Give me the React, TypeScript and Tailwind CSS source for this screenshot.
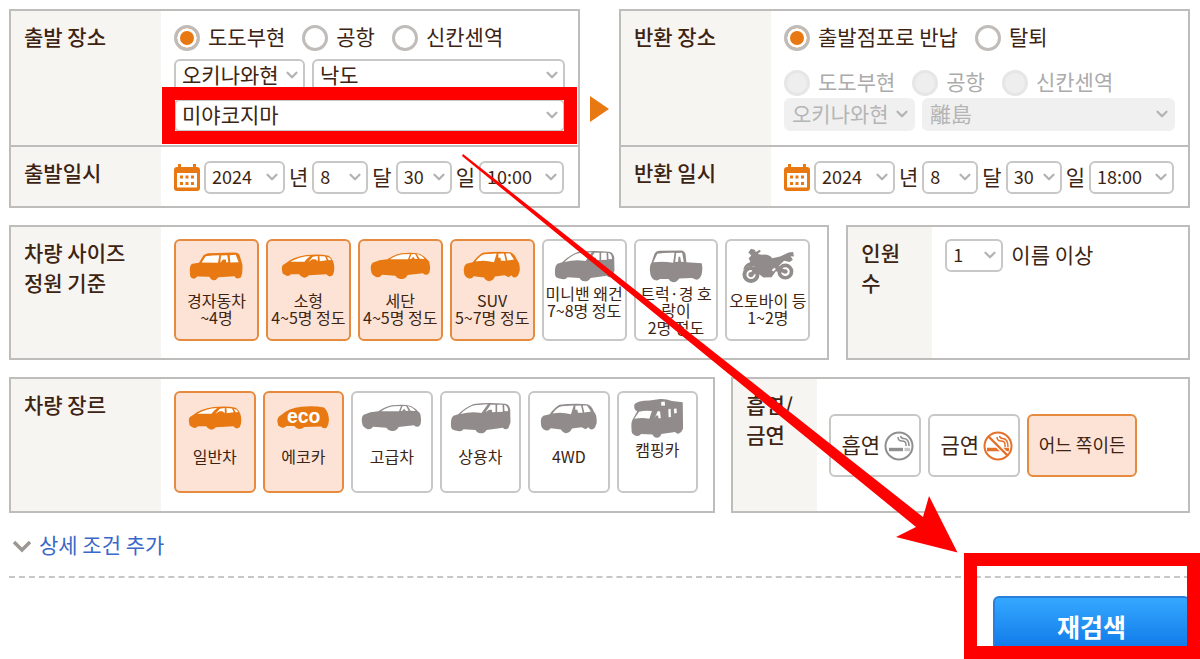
import type { ReactNode } from "react";
import { ChevronDown } from "lucide-react";
import clsx from "clsx";

const KeiCar = () => (
  <svg viewBox="88 82 162 86" width="54" height="29" fill="currentColor">
    <path d="M91 145Q88 122 98 117L118 114L131 92Q135 87 145 85L225 83Q237 83 240 92L248 118Q250 145 244 157L236 161Q228 163 225 154L176 157Q170 167 160 166Q153 165 149 156L112 155Q108 163 100 161Q90 158 91 145Z" />
    <path fill="#fff" d="M126 113L138 94Q158 91 179 91L175 114ZM184 92L203 91L206 112L199 112L199 104L190 104L182 114ZM210 91L228 90L237 112L212 113Z" />
  </svg>
);

const CompactCar = () => (
  <svg viewBox="363 90 163 72" width="54" height="24" fill="currentColor">
    <path d="M366 138Q363 124 375 119Q400 98 440 93Q480 89 507 95Q520 104 523 122Q526 142 519 154Q508 162 500 151L447 154Q441 162 431 161Q422 159 418 151L393 151Q387 158 378 155L368 149Z" />
    <path fill="#fff" d="M391 113Q418 98 451 96L440 106L434 113ZM446 113L459 98L474 96L474 112L467 106L458 106ZM479 96L496 97L501 109L480 112ZM501 98Q511 99 515 108L507 109Z" />
  </svg>
);

const EcoCar = () => (
  <svg viewBox="348 82 163 74" width="54" height="24" fill="currentColor">
    <path d="M351 132Q348 118 360 111Q385 88 425 84Q468 81 494 87Q506 96 509 118Q511 136 503 148Q493 155 486 145L434 147Q426 154 416 153Q407 151 403 144L379 144Q371 151 363 148L353 142Z" />
    <text x="380" y="133" fill="#fff" fontSize="60" fontWeight="700" fontFamily="Liberation Sans, Arial, sans-serif">eco</text>
  </svg>
);

const Sedan = () => (
  <svg viewBox="628 90 183 84" width="61" height="28" fill="currentColor">
    <path d="M632 150Q627 130 636 122Q655 113 680 112Q702 97 722 94Q755 90 778 96Q794 104 805 118Q811 136 806 152Q797 164 787 154L741 159Q734 173 720 171Q709 170 704 161L664 158Q656 169 645 164Q634 160 632 150Z" />
    <path fill="#fff" d="M688 112Q708 98 727 97L748 96L742 112ZM752 97L763 96L771 110L763 111L758 104L751 111L747 111ZM768 96Q783 99 792 111L777 110Z" />
  </svg>
);

const Suv = () => (
  <svg viewBox="68 85 174 92" width="58" height="31" fill="currentColor">
    <path d="M71 148Q68 130 78 123L97 118Q112 98 127 90Q165 85 210 88Q223 92 230 111Q240 122 238 145L233 158Q222 171 213 157L205 163L193 157L164 161Q157 175 146 175Q136 174 131 164L100 160Q94 170 84 166Q71 160 71 148Z" />
    <path fill="#fff" d="M106 116Q119 96 133 94L169 92L161 118Q132 110 106 116ZM174 93L191 92L196 114L182 114L180 105L174 105ZM196 92L209 92L221 110L201 113Z" />
  </svg>
);

const Minivan = () => (
  <svg viewBox="340 84 182 96" width="61" height="32" fill="currentColor">
    <path d="M343 160Q340 132 350 125L364 121Q388 98 411 90Q450 84 505 89Q517 91 520 106L521 145L515 162Q505 170 498 161L449 168Q443 179 431 178Q420 177 416 168L380 166Q374 174 364 171Q344 170 343 160Z" />
    <path fill="#fff" d="M371 120Q395 97 413 94L453 91L434 117Q402 112 371 120ZM446 115L461 92L476 92L476 114L466 115L465 107L457 107ZM481 92L497 92L498 113L481 114ZM502 92Q513 94 514 111L503 112Z" />
  </svg>
);

const Truck = () => (
  <svg viewBox="625 75 163 99" width="54" height="33" fill="currentColor">
    <path d="M628 140Q626 120 633 112L642 85Q646 78 656 77L725 76Q733 78 735 86L738 112L784 115Q788 130 784 148Q777 167 766 164L755 159L716 161Q709 173 698 172Q688 171 684 162L658 162Q651 169 642 165Q630 160 628 140Z" />
    <path fill="#fff" d="M638 112L650 86Q675 82 702 83L698 113Q665 108 638 112ZM707 84L725 83L730 110L722 111L719 95L714 95L713 110L704 111Z" />
  </svg>
);

const Motorcycle = () => (
  <svg viewBox="900 70 162 110" width="54" height="36" fill="currentColor">
    <circle cx="929" cy="151" r="20" fill="none" stroke="currentColor" strokeWidth="12" />
    <circle cx="1034" cy="142" r="19" fill="none" stroke="currentColor" strokeWidth="11" />
    <circle cx="929" cy="151" r="8" />
    <circle cx="1034" cy="142" r="7" />
    <path d="M921 84L929 72L940 75L944 82L956 75L959 80L950 88L963 91Q982 86 994 101L1018 96L1044 84L1058 82L1060 96L1050 95L1057 106L1047 113L1030 109L1014 125L1036 139L1032 147L1005 141L992 159L967 160L948 146L934 154L927 149L940 125L919 127L905 137Q908 120 927 113L922 101L930 93Z" />
    <path fill="#fff" d="M1000 130L1005 134L998 142L992 138Z" />
  </svg>
);

const Camper = () => (
  <svg viewBox="601 56 163 122" width="54" height="40" fill="currentColor">
    <path d="M605 153Q602 130 609 120L622 97Q609 88 614 75Q622 65 660 64L692 59Q710 58 728 65L761 69L762 150L756 160Q745 170 738 160L696 166Q692 177 682 177Q672 176 669 167L634 166Q626 175 616 170Q604 167 605 153Z" />
    <path fill="#fff" d="M613 119L628 98Q646 93 667 96L659 119Q637 115 613 119ZM675 118L685 96L692 97L694 118L687 118L686 109L680 109ZM695 68L706 67L707 79L696 80ZM717 90L724 89L725 114L718 115ZM734 89L742 88L743 102L735 103Z" />
  </svg>
);

const SmokingIcon = () => (
  <svg viewBox="0 0 30 30" width="30" height="30" fill="none" stroke="#8f8f8f">
    <circle cx="15" cy="15" r="13.5" strokeWidth="2" />
    <path d="M5 18.5H19" strokeWidth="3.4" />
    <path d="M20.5 18.5H26" strokeWidth="3.4" stroke="#c9c5c3" />
    <path d="M14 6Q14 10 18 10Q22 10 22 13.5L22 15M16.5 5Q17 7.5 20 7.5Q25 8 25 15" strokeWidth="1.5" />
  </svg>
);

const NoSmokingIcon = () => (
  <svg viewBox="0 0 30 30" width="30" height="30" fill="none" stroke="#e5702a">
    <path d="M4 18.5H18M20 18.5H26" strokeWidth="3.4" />
    <path d="M14 6Q14 10 18 10Q22 10 22 13.5L22 16M16.5 5Q17 7.5 20 7.5Q25 8 25 16" strokeWidth="1.5" />
    <path d="M6 6L24 24" stroke="#fff" strokeWidth="5" />
    <circle cx="15" cy="15" r="13.5" strokeWidth="2" />
    <path d="M5.5 5.5L24.5 24.5" strokeWidth="2.4" />
  </svg>
);

const carSizes = [
  { id: "kei", icon: KeiCar, lines: ["경자동차", "~4명"], checked: true },
  { id: "compact", icon: CompactCar, lines: ["소형", "4~5명 정도"], checked: true },
  { id: "sedan", icon: Sedan, lines: ["세단", "4~5명 정도"], checked: true },
  { id: "suv", icon: Suv, lines: ["SUV", "5~7명 정도"], checked: true },
  { id: "minivan", icon: Minivan, lines: ["미니밴 왜건", "7~8명 정도"], tight: true },
  { id: "truck", icon: Truck, lines: ["트럭·경 호", "랑이", "2명 정도"], tight: true },
  { id: "bike", icon: Motorcycle, lines: ["오토바이 등", "1~2명"] },
];

const carGenres = [
  { id: "standard", icon: CompactCar, lines: ["일반차"], checked: true },
  { id: "eco", icon: EcoCar, lines: ["에코카"], checked: true },
  { id: "luxury", icon: Sedan, lines: ["고급차"] },
  { id: "business", icon: Minivan, lines: ["상용차"] },
  { id: "4wd", icon: Suv, lines: ["4WD"] },
  { id: "camper", icon: Camper, lines: ["캠핑카"], tight: true },
];

const tileStyle =
  "rounded-md border-2 border-[#c9c7c5] bg-white has-checked:border-[#e58a3e] has-checked:bg-[#fce3d6]";

type TileProps = {
  name: string;
  item: { id: string; icon: () => ReactNode; lines: string[]; checked?: boolean; tight?: boolean };
  lineClass: string;
};

const CarTile = ({ name, item, lineClass }: TileProps) => (
  <label
    className={clsx(
      tileStyle,
      "relative flex h-[102px] min-w-0 flex-1 cursor-pointer flex-col items-center pt-[7px] text-[#918c8b] has-checked:text-[#e87811]"
    )}
  >
    <input type="checkbox" name={name} value={item.id} defaultChecked={item.checked} className="sr-only" />
    <span className="flex h-9 shrink-0 items-center">
      <item.icon />
    </span>
    <span
      className={clsx(
        "flex flex-col items-center whitespace-nowrap text-[16px] text-[#3d2412]",
        item.tight ? "mt-px" : "mt-2",
        lineClass
      )}
    >
      {item.lines.map((line) => (
        <span key={line}>{line}</span>
      ))}
    </span>
  </label>
);

type SelectProps = { label: string; options: string[]; className: string; disabled?: boolean; small?: boolean };

const Select = ({ label, options, className, disabled, small }: SelectProps) => (
  <span className={clsx("relative block h-[33px]", className)}>
    <select
      aria-label={label}
      disabled={disabled}
      className={clsx(
        "block h-full w-full appearance-none rounded-md border-2 border-[#c9c7c5] bg-white pb-[3px] pl-[6px] leading-[26px] disabled:border-[#f0f0f0] disabled:bg-[#f0f0f0] disabled:text-[#b5b5b5] disabled:opacity-100",
        small ? "text-[18px]" : "text-[21px]"
      )}
    >
      {options.map((option) => (
        <option key={option}>{option}</option>
      ))}
    </select>
    <ChevronDown
      size={18}
      strokeWidth={3}
      className="pointer-events-none absolute top-[7px] right-1 text-[#b5b3b1]"
    />
  </span>
);

type RadioProps = { name: string; label: string; checked?: boolean; disabled?: boolean };

const Radio = ({ name, label, checked, disabled }: RadioProps) => (
  <label className={clsx("flex h-[26px] items-start gap-2 leading-[22px]", disabled && "text-[#ababab]")}>
    <input
      type="radio"
      name={name}
      defaultChecked={checked}
      disabled={disabled}
      className="size-[26px] appearance-none rounded-full border-3 border-[#bfbcba] bg-white checked:bg-[#e87811] checked:shadow-[inset_0_0_0_3px_#fff] disabled:border-[#e6e6e6] disabled:bg-[#eeeeee]"
    />
    {label}
  </label>
);

const CalendarIcon = () => (
  <svg viewBox="0 0 26 27" width="26" height="27" fill="#e87811">
    <path d="M3 3H23Q26 3 26 6V24Q26 27 23 27H3Q0 27 0 24V6Q0 3 3 3Z" />
    <path d="M4 0H7V5H4ZM19 0H22V5H19Z" />
    <path fill="#fff" d="M3 9H23V23.5H3Z" />
    <path d="M6 11.5H9V14.5H6ZM11.5 11.5H14.5V14.5H11.5ZM17 11.5H20V14.5H17ZM6 18H9V21H6ZM11.5 18H14.5V21H11.5ZM17 18H20V21H17Z" />
  </svg>
);

const DateRow = ({ prefix, time }: { prefix: string; time: string }) => (
  <div className="flex items-center gap-1 leading-[26px]">
    <CalendarIcon />
    <Select small label={`${prefix} 년`} options={["2024", "2025"]} className="w-[81px]" />
    <span className="pb-1">년</span>
    <Select small label={`${prefix} 달`} options={["8", "9", "10"]} className="w-[56px]" />
    <span className="pb-1">달</span>
    <Select small label={`${prefix} 일`} options={["30", "31"]} className="w-[56px]" />
    <span className="pb-1">일</span>
    <Select small label={`${prefix} 시간`} options={[time]} className="w-[85px]" />
  </div>
);

const Heading = ({ children, narrow }: { children: ReactNode; narrow?: boolean }) => (
  <h2
    className={clsx(
      "shrink-0 bg-[#f7f5f2] pt-[10px] pl-[13px] text-[21px] leading-[30px] font-medium",
      narrow ? "w-[84px]" : "w-[150px]"
    )}
  >
    {children}
  </h2>
);

const panel = "border-2 border-[#bfbdbb] bg-white";

export default function App() {
  return (
    <main className="relative overflow-hidden bg-white pt-[9px] pr-[10px] pb-[3px] pl-[9px] font-['Noto_Sans_CJK_KR','Noto_Sans_CJK_JP',sans-serif] text-[21px] leading-[30px] text-[#3d2412]">
      <form className="flex flex-col" onSubmit={(e) => e.preventDefault()}>
        {/* departure / return */}
        <div className="flex items-stretch">
          <section className={clsx(panel, "min-w-0 flex-1")}>
            <div className="flex h-[136px] border-b-2 border-[#bfbdbb]">
              <Heading>출발 장소</Heading>
              <div className="min-w-0 flex-1 px-[13px] pt-[14px]">
                <div className="flex gap-[17px]">
                  <Radio name="from" label="도도부현" checked />
                  <Radio name="from" label="공항" />
                  <Radio name="from" label="신칸센역" />
                </div>
                <div className="mt-2 flex gap-[7px]">
                  <Select label="출발 현" options={["오키나와현"]} className="w-[131px]" />
                  <Select label="출발 지역" options={["낙도"]} className="flex-1" />
                </div>
                <div className="relative mt-[7px]">
                  <Select label="출발 섬" options={["미야코지마"]} className="w-full" />
                  <div className="pointer-events-none absolute -inset-3 border-13 border-[#ff0000]" />
                </div>
              </div>
            </div>
            <div className="flex">
              <Heading>출발일시</Heading>
              <div className="px-[13px] pt-[14px] pb-3">
                <DateRow prefix="출발" time="10:00" />
              </div>
            </div>
          </section>

          <div className="flex w-[39px] items-center justify-center">
            <svg viewBox="0 0 19 26" width="19" height="26" fill="#e87811">
              <path d="M0 0L19 13L0 26Z" />
            </svg>
          </div>

          <section className={clsx(panel, "min-w-0 flex-1")}>
            <div className="flex h-[136px] border-b-2 border-[#bfbdbb]">
              <Heading>반환 장소</Heading>
              <div className="min-w-0 flex-1 px-[13px] pt-[14px]">
                <div className="flex gap-[17px]">
                  <Radio name="return" label="출발점포로 반납" checked />
                  <Radio name="return" label="탈퇴" />
                </div>
                <div className="mt-[19px] flex gap-[17px]">
                  <Radio name="to" label="도도부현" disabled />
                  <Radio name="to" label="공항" disabled />
                  <Radio name="to" label="신칸센역" disabled />
                </div>
                <div className="mt-[2px] flex gap-[7px]">
                  <Select disabled label="반환 현" options={["오키나와현"]} className="w-[131px]" />
                  <Select disabled label="반환 지역" options={["離島"]} className="flex-1" />
                </div>
              </div>
            </div>
            <div className="flex">
              <Heading>반환 일시</Heading>
              <div className="px-[13px] pt-[14px] pb-3">
                <DateRow prefix="반환" time="18:00" />
              </div>
            </div>
          </section>
        </div>

        {/* size / people */}
        <div className="mt-[17px] flex gap-[17px]">
          <section className={clsx(panel, "flex min-w-0 flex-[822]")}>
            <Heading>
              차량 사이즈
              <br />
              정원 기준
            </Heading>
            <div className="flex min-w-0 flex-1 gap-[7px] pt-3 pr-[17px] pb-[17px] pl-[13px]">
              {carSizes.map((item) => (
                <CarTile key={item.id} name="size" item={item} lineClass="leading-[17px]" />
              ))}
            </div>
          </section>
          <section className={clsx(panel, "flex min-w-0 flex-[342]")}>
            <Heading narrow>
              인원
              <br />수
            </Heading>
            <div className="flex items-start gap-2 pt-3 pl-[13px]">
              <Select small label="인원수" options={["1", "2", "3", "4"]} className="w-[58px]" />
              <span>이름 이상</span>
            </div>
          </section>
        </div>

        {/* genre / smoking */}
        <div className="mt-[17px] flex gap-4">
          <section className={clsx(panel, "flex min-w-0 flex-[707]")}>
            <Heading>차량 장르</Heading>
            <div className="flex min-w-0 flex-1 gap-[7px] pt-3 pr-[15px] pb-[18px] pl-[13px]">
              {carGenres.map((item) => (
                <CarTile key={item.id} name="genre" item={item} lineClass="leading-[25px]" />
              ))}
            </div>
          </section>
          <section className={clsx(panel, "flex min-w-0 flex-[458]")}>
            <Heading narrow>
              흡연/
              <br />
              금연
            </Heading>
            <div className="flex items-start gap-[7px] pt-[35px] pl-3">
              <label className={clsx(tileStyle, "relative flex h-[63px] w-[92px] items-center justify-end gap-1 pr-[5px]")}>
                <input type="radio" name="smoking" className="sr-only" />
                <span className="pb-1">흡연</span>
                <SmokingIcon />
              </label>
              <label className={clsx(tileStyle, "relative flex h-[63px] w-[92px] items-center justify-end gap-1 pr-[5px]")}>
                <input type="radio" name="smoking" className="sr-only" />
                <span className="pb-1">금연</span>
                <NoSmokingIcon />
              </label>
              <label className={clsx(tileStyle, "relative flex h-[63px] w-[110px] items-center justify-center text-[18px]")}>
                <input type="radio" name="smoking" defaultChecked className="sr-only" />
                <span className="pb-1">어느 쪽이든</span>
              </label>
            </div>
          </section>
        </div>

        <a href="#more" className="mt-4 flex items-center self-start text-[#3a68c8]">
          <svg viewBox="0 0 30 30" width="30" height="30" fill="none" stroke="#9c9792" strokeWidth="3.5">
            <path d="M5 12L13 20L21 12" />
          </svg>
          <span className="pb-px">상세 조건 추가</span>
        </a>

        <div className="mt-4 border-t-2 border-dashed border-[#c9c7c5]" />

        <div className="relative mt-[18px] self-end">
          <button
            type="submit"
            className="block h-[60px] w-[197px] rounded-md border-2 border-[#2a7fdc] bg-linear-to-b from-[#35a8ff] to-[#0a74e6] text-[25px] font-bold text-white"
          >
            재검색
          </button>
          <div className="pointer-events-none absolute -top-[43px] -right-[10px] -bottom-[3px] -left-[29px] border-13 border-[#ff0000]" />
        </div>
      </form>

      {/* pointer from the island select to the search button */}
      <svg
        viewBox="462 154 496 399"
        width="496"
        height="399"
        fill="#ff0000"
        className="pointer-events-none absolute top-[154px] left-[462px]"
      >
        <path d="M463 154L923 517L929 496L957.5 552.5L896 537L916 527L462 156Z" />
      </svg>
    </main>
  );
}
